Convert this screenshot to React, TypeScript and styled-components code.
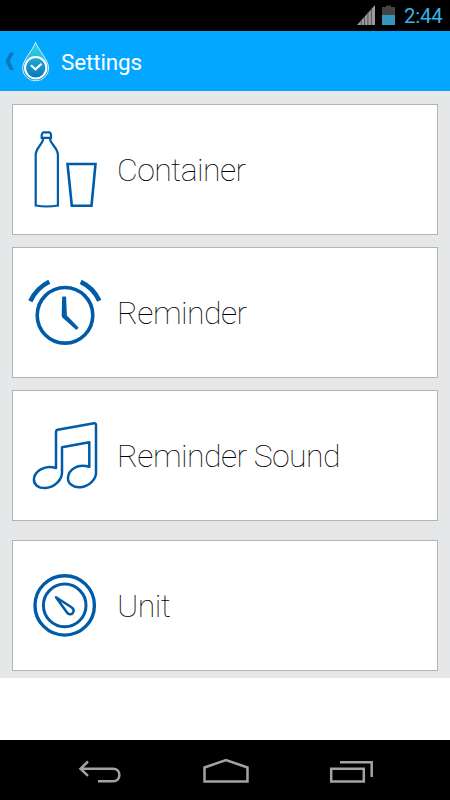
import React from "react";
import styled, { createGlobalStyle } from "styled-components";

const GlobalStyle = createGlobalStyle`
  *, *::before, *::after { box-sizing: border-box; }
  body { margin: 0; background: #fff; }
`;

const Screen = styled.div`
  display: flex;
  flex-direction: column;
  width: 450px;
  height: 800px;
  overflow: hidden;
  background: #fff;
  font-family: Roboto, sans-serif;
`;

const StatusBar = styled.div`
  display: flex;
  align-items: center;
  justify-content: flex-end;
  flex: none;
  height: 31px;
  padding-right: 7px;
  background: #000;
`;

const StatusIcons = styled.svg`
  display: block;
  width: 47px;
  height: 31px;
`;

const Clock = styled.span`
  width: 39px;
  padding-top: 2px;
  font-size: 20.4px;
  line-height: 31px;
  letter-spacing: -0.2px;
  color: #33b5e5;
  white-space: nowrap;
`;

const ActionBar = styled.header`
  display: flex;
  align-items: center;
  flex: none;
  height: 60px;
  background: #04a7ff;
`;

const ActionLogo = styled.svg`
  display: block;
  width: 60px;
  height: 60px;
`;

const Title = styled.h1`
  margin: 0;
  padding: 1px 0 0 1px;
  font-size: 22.4px;
  font-weight: 400;
  line-height: 30px;
  letter-spacing: -0.1px;
  color: #fff;
`;

const List = styled.main`
  display: flex;
  flex-direction: column;
  flex: none;
  gap: 12px;
  height: 587px;
  padding: 13px 12px 0;
  background: #e6e7e8;
`;

const Card = styled.section<{ $spaced?: boolean }>`
  display: flex;
  align-items: center;
  flex: none;
  height: 131px;
  margin-top: ${(p) => (p.$spaced ? "7px" : "0")};
  border: 1px solid #b2b4b5;
  background: #fff;
`;

const CardIcon = styled.svg`
  display: block;
  flex: none;
  width: 105px;
  height: 129px;
  fill: none;
  stroke: #005ca9;
`;

const Label = styled.span`
  padding-top: 1px;
  margin-left: -1px;
  font-size: 32px;
  font-weight: 100;
  line-height: 40px;
  letter-spacing: -0.58px;
  color: #000;
  white-space: nowrap;
`;

const NavBar = styled.nav`
  display: flex;
  justify-content: space-between;
  flex: none;
  height: 60px;
  margin-top: auto;
  padding: 0 74px 0 75px;
  background: #000;
`;

const NavIcon = styled.svg`
  display: block;
  width: 50px;
  height: 60px;
  fill: none;
  stroke: #a3a3a3;
  stroke-width: 2.5;
`;

const BottleIcon = () => (
  <CardIcon viewBox="13 105 105 129">
    <path strokeWidth="2.200" d="M43.500 132.300h6q1.500.7 1.500 2.700v2.800h-9.300v-2.800q0-2 1.800-2.700zM43.300 138c0 6-7.600 9.500-7.600 17v50.500q11 2 22.200 0v-50.500c0-7.500-8-11-8-17" />
    <path strokeWidth="2.600" d="M67.500 164H95.500L91.500 205.700H71.800z" />
  </CardIcon>
);

const AlarmIcon = () => (
  <CardIcon viewBox="13 248 105 129">
    <circle cx="65" cy="315.300" r="27.800" strokeWidth="3.600" />
    <path strokeWidth="4.600" d="M30.300 301.300Q36.500 288 49.300 281.800M99.300 300.800Q93.500 287.700 80.700 281.800" />
    <path fill="#005ca9" stroke="none" d="M62.100 297.500q0-1 1-1h2q1 0 1 1l.8 18 11.100 11.400q.7.700 0 1.500l-.8.900q-.8.700-1.700 0l-12.900-11.500q-.9-.8-.9-2z" />
  </CardIcon>
);

const MusicIcon = () => (
  <CardIcon viewBox="13 391 105 129">
    <path
      strokeWidth="2.500"
      strokeLinejoin="round"
      d="M56 467.500V432q0-1.800 1.700-2.200L94 423.200q2-.3 2 2v47c.3 7-7 14.200-15.500 15-7.500.6-13-3.800-12.500-9.600.6-7.500 9-14.500 21.300-10.800V442.200L62 447.200V472c.3 8-7.500 15.200-16 16-7.500.6-12.300-3.300-12.100-8.700.4-8 10.500-14.800 22.100-11.300z"
    />
  </CardIcon>
);

const GaugeIcon = () => (
  <CardIcon viewBox="13 541 105 129">
    <circle cx="64.700" cy="605.400" r="29.700" strokeWidth="3.400" />
    <circle cx="64.700" cy="605.400" r="21.300" strokeWidth="3" />
    <path strokeWidth="2.500" strokeLinejoin="round" d="M56 597.200L71.500 607.200C76 610.500 72.500 615 69.500 614.200Q68 614 67 612.500z" />
  </CardIcon>
);

export default function App() {
  return (
    <>
      <GlobalStyle />
      <Screen>
        <StatusBar>
          <StatusIcons viewBox="357 0 47 31">
            <path fill="#9a9a9a" d="M357 25L375 5V25z" />
            <path stroke="#333" strokeWidth=".7" d="M361.200 20v5M364.500 16v9M367.900 12v13M371.400 8v17" />
            <path fill="#444" d="M382 7h4V5.500h5V7h4v8h-13z" />
            <path fill="#3596bd" d="M382 15h13v10h-13z" />
          </StatusIcons>
          <Clock>2:44</Clock>
        </StatusBar>
        <ActionBar>
          <ActionLogo viewBox="0 31 60 60">
            <defs>
              <linearGradient id="drop" x1="0" y1="0" x2="0" y2="1">
                <stop offset="0" stopColor="#35d5e8" />
                <stop offset=".5" stopColor="#22b5dc" />
                <stop offset="1" stopColor="#087bc4" />
              </linearGradient>
              <linearGradient id="dial" x1="0" y1="0" x2="0" y2="1">
                <stop offset="0" stopColor="#24aad8" />
                <stop offset="1" stopColor="#0874bd" />
              </linearGradient>
            </defs>
            <path fill="#0879b8" d="M10 52.500h4L9.700 61.300 14 70h-4L5.500 61.300z" />
            <path fill="url(#drop)" stroke="#d5f3fc" strokeWidth="1" d="M35.600 42.200C32.500 51 22.600 60 22.600 68.300a13 12.500 0 0 0 26 0C48.600 60 38.700 51 35.600 42.200z" />
            <circle cx="35.700" cy="67.800" r="10.700" fill="url(#dial)" stroke="#fff" strokeWidth="2" />
            <path fill="none" stroke="#fff" strokeWidth="2.100" d="M31 65.300l4.400 4 6.200-5.600" />
          </ActionLogo>
          <Title>Settings</Title>
        </ActionBar>
        <List>
          <Card>
            <BottleIcon />
            <Label>Container</Label>
          </Card>
          <Card>
            <AlarmIcon />
            <Label>Reminder</Label>
          </Card>
          <Card>
            <MusicIcon />
            <Label>Reminder Sound</Label>
          </Card>
          <Card $spaced>
            <GaugeIcon />
            <Label>Unit</Label>
          </Card>
        </List>
        <NavBar>
          <NavIcon viewBox="75 740 50 60">
            <path d="M88 761.500l-7.500 7.200 7.500 7.200M80.500 768.700H113c8.500 0 8.500 12.600 0 12.600H98" />
          </NavIcon>
          <NavIcon viewBox="200 740 50 60">
            <path d="M203.500 781.500V767.500L225 760l21.500 7.500v14z" />
          </NavIcon>
          <NavIcon viewBox="326 740 50 60">
            <path d="M331.200 768.700h32.600v12.800h-32.600zM340 762.300h31.700V777" />
          </NavIcon>
        </NavBar>
      </Screen>
    </>
  );
}
